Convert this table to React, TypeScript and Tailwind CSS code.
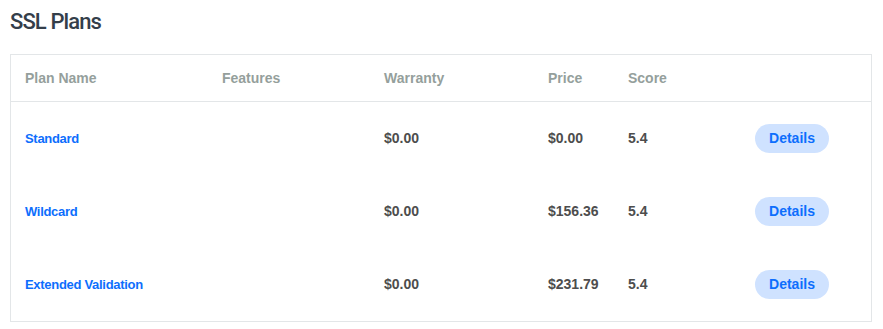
import React from "react";

const plans = [
  { name: "Standard", warranty: "$0.00", price: "$0.00", score: "5.4" },
  { name: "Wildcard", warranty: "$0.00", price: "$156.36", score: "5.4" },
  { name: "Extended Validation", warranty: "$0.00", price: "$231.79", score: "5.4" },
];

export default function App() {
  return (
    <div className="bg-white w-[883px] h-[329px] px-[10px] pt-[7px] font-['Liberation_Sans',Arial,sans-serif]">
      <h2 className="font-['Roboto',sans-serif] text-[22px] leading-[30px] tracking-[-0.9px] text-[#343e4a] font-medium">
        SSL Plans
      </h2>
      <div className="mt-[17px] w-[862px] border border-[#e3e6e8]">
        <div className="flex h-[47px] pt-[1px] items-center border-b border-[#e3e6e8] text-[14px] font-bold text-[#959f9c]">
          <div className="w-[211px] pl-[14px]">Plan Name</div>
          <div className="w-[162px]">Features</div>
          <div className="w-[164px]">Warranty</div>
          <div className="w-[80px]">Price</div>
          <div>Score</div>
        </div>
        {plans.map((p, i) => (
          <div key={i} className="flex h-[73px] items-center text-[14px] font-bold">
            <div className="w-[211px] pl-[14px] text-[13px] tracking-[-0.3px] text-[#0d6efd]">{p.name}</div>
            <div className="w-[162px]"></div>
            <div className="w-[164px] text-[#4d4d4d]">{p.warranty}</div>
            <div className="w-[80px] text-[#4d4d4d]">{p.price}</div>
            <div className="w-[127px] text-[#4d4d4d]">{p.score}</div>
            <button className="w-[74px] h-[29px] rounded-full bg-[#cfe2ff] text-[#0d6efd] text-[14px] font-bold">
              Details
            </button>
          </div>
        ))}
      </div>
    </div>
  );
}
